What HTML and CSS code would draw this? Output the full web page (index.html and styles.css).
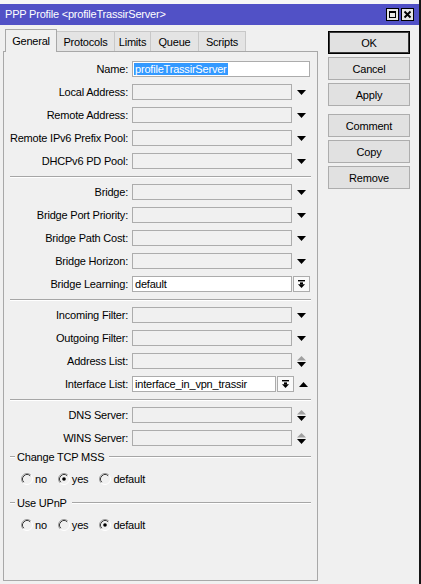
FILE: index.html
```html
<!DOCTYPE html>
<html>
<head>
<meta charset="utf-8">
<title>PPP Profile</title>
<link rel="stylesheet" href="styles.css">
</head>
<body>
<div class="window">
  <div class="topstrip"></div>
  <div class="titlebar">
    <span class="title">PPP Profile &lt;profileTrassirServer&gt;</span>
    <div class="tbtns">
      <span class="tbtn"><svg width="11" height="11" viewBox="0 0 11 11"><rect x="2.5" y="2.5" width="6" height="6" fill="none" stroke="#000" stroke-width="1"/><rect x="2" y="2" width="7" height="2" fill="#000"/></svg></span>
      <span class="tbtn"><svg width="11" height="11" viewBox="0 0 11 11"><path d="M2.5 2.5 L8.5 8.5 M8.5 2.5 L2.5 8.5" stroke="#000" stroke-width="1.9" fill="none"/></svg></span>
    </div>
  </div>
  <div class="body">
    <div class="left">
      <div class="tabs">
        <div class="tab sel t-general">General</div>
        <div class="tab t-protocols">Protocols</div>
        <div class="tab t-limits">Limits</div>
        <div class="tab t-queue">Queue</div>
        <div class="tab t-scripts">Scripts</div>
      </div>
      <div class="panel">
        <div class="sec">
          <div class="row"><span class="lbl">Name:</span><div class="inp white w178"><span class="hl">profileTrassirServer</span></div></div>
          <div class="row"><span class="lbl">Local Address:</span><div class="inp w160"></div><span class="ctl"><svg width="9" height="5" viewBox="0 0 9 5"><polygon points="0,0 9,0 4.5,5" fill="#000"/></svg></span></div>
          <div class="row"><span class="lbl">Remote Address:</span><div class="inp w160"></div><span class="ctl"><svg width="9" height="5" viewBox="0 0 9 5"><polygon points="0,0 9,0 4.5,5" fill="#000"/></svg></span></div>
          <div class="row"><span class="lbl">Remote IPv6 Prefix Pool:</span><div class="inp w160"></div><span class="ctl"><svg width="9" height="5" viewBox="0 0 9 5"><polygon points="0,0 9,0 4.5,5" fill="#000"/></svg></span></div>
          <div class="row"><span class="lbl">DHCPv6 PD Pool:</span><div class="inp w160"></div><span class="ctl"><svg width="9" height="5" viewBox="0 0 9 5"><polygon points="0,0 9,0 4.5,5" fill="#000"/></svg></span></div>
        </div>
        <div class="sep"></div>
        <div class="sec">
          <div class="row"><span class="lbl">Bridge:</span><div class="inp w160"></div><span class="ctl"><svg width="9" height="5" viewBox="0 0 9 5"><polygon points="0,0 9,0 4.5,5" fill="#000"/></svg></span></div>
          <div class="row"><span class="lbl">Bridge Port Priority:</span><div class="inp w160"></div><span class="ctl"><svg width="9" height="5" viewBox="0 0 9 5"><polygon points="0,0 9,0 4.5,5" fill="#000"/></svg></span></div>
          <div class="row"><span class="lbl">Bridge Path Cost:</span><div class="inp w160"></div><span class="ctl"><svg width="9" height="5" viewBox="0 0 9 5"><polygon points="0,0 9,0 4.5,5" fill="#000"/></svg></span></div>
          <div class="row"><span class="lbl">Bridge Horizon:</span><div class="inp w160"></div><span class="ctl"><svg width="9" height="5" viewBox="0 0 9 5"><polygon points="0,0 9,0 4.5,5" fill="#000"/></svg></span></div>
          <div class="row"><span class="lbl">Bridge Learning:</span><div class="inp white w160"><span class="val">default</span></div><span class="ibtn"><svg width="7" height="8" viewBox="0 0 7 8"><rect x="0" y="0" width="7" height="1.4" fill="#000"/><rect x="2" y="2.4" width="3" height="2" fill="#000"/><polygon points="0,4.2 7,4.2 3.5,8" fill="#000"/></svg></span></div>
        </div>
        <div class="sep"></div>
        <div class="sec">
          <div class="row"><span class="lbl">Incoming Filter:</span><div class="inp w160"></div><span class="ctl"><svg width="9" height="5" viewBox="0 0 9 5"><polygon points="0,0 9,0 4.5,5" fill="#000"/></svg></span></div>
          <div class="row"><span class="lbl">Outgoing Filter:</span><div class="inp w160"></div><span class="ctl"><svg width="9" height="5" viewBox="0 0 9 5"><polygon points="0,0 9,0 4.5,5" fill="#000"/></svg></span></div>
          <div class="row"><span class="lbl">Address List:</span><div class="inp w160"></div><span class="ctl"><svg width="9" height="11" viewBox="0 0 9 11"><polygon points="0,4.5 9,4.5 4.5,0" fill="#a0a0a0"/><polygon points="0,6 9,6 4.5,11" fill="#000"/></svg></span></div>
          <div class="row"><span class="lbl">Interface List:</span><div class="inp white w144"><span class="val">interface_in_vpn_trassir</span></div><span class="ibtn"><svg width="7" height="8" viewBox="0 0 7 8"><rect x="0" y="0" width="7" height="1.4" fill="#000"/><rect x="2" y="2.4" width="3" height="2" fill="#000"/><polygon points="0,4.2 7,4.2 3.5,8" fill="#000"/></svg></span><span class="ctl"><svg width="9" height="5" viewBox="0 0 9 5"><polygon points="0,5 9,5 4.5,0" fill="#000"/></svg></span></div>
        </div>
        <div class="sep"></div>
        <div class="sec">
          <div class="row"><span class="lbl">DNS Server:</span><div class="inp w160"></div><span class="ctl"><svg width="9" height="11" viewBox="0 0 9 11"><polygon points="0,4.5 9,4.5 4.5,0" fill="#a0a0a0"/><polygon points="0,6 9,6 4.5,11" fill="#000"/></svg></span></div>
          <div class="row"><span class="lbl">WINS Server:</span><div class="inp w160"></div><span class="ctl"><svg width="9" height="11" viewBox="0 0 9 11"><polygon points="0,4.5 9,4.5 4.5,0" fill="#a0a0a0"/><polygon points="0,6 9,6 4.5,11" fill="#000"/></svg></span></div>
        </div>
        <div class="ghead g1"><span class="gline short"></span><span class="gtext">Change TCP MSS</span><span class="gline"></span></div>
        <div class="radios">
          <span class="radio"><svg width="12" height="12" viewBox="0 0 12 12"><path d="M2.11 9.89 A5.5 5.5 0 0 1 9.89 2.11" stroke="#9a9a9a" fill="none"/><path d="M2.82 9.18 A4.5 4.5 0 0 1 9.18 2.82" stroke="#3a3a3a" fill="none"/><path d="M9.89 2.11 A5.5 5.5 0 0 1 2.11 9.89" stroke="#fff" fill="none"/></svg>no</span>
          <span class="radio"><svg width="12" height="12" viewBox="0 0 12 12"><path d="M2.11 9.89 A5.5 5.5 0 0 1 9.89 2.11" stroke="#9a9a9a" fill="none"/><path d="M2.82 9.18 A4.5 4.5 0 0 1 9.18 2.82" stroke="#3a3a3a" fill="none"/><path d="M9.89 2.11 A5.5 5.5 0 0 1 2.11 9.89" stroke="#fff" fill="none"/><circle cx="6" cy="6" r="1.8" fill="#000"/></svg>yes</span>
          <span class="radio"><svg width="12" height="12" viewBox="0 0 12 12"><path d="M2.11 9.89 A5.5 5.5 0 0 1 9.89 2.11" stroke="#9a9a9a" fill="none"/><path d="M2.82 9.18 A4.5 4.5 0 0 1 9.18 2.82" stroke="#3a3a3a" fill="none"/><path d="M9.89 2.11 A5.5 5.5 0 0 1 2.11 9.89" stroke="#fff" fill="none"/></svg>default</span>
        </div>
        <div class="ghead g2"><span class="gline short"></span><span class="gtext">Use UPnP</span><span class="gline"></span></div>
        <div class="radios">
          <span class="radio"><svg width="12" height="12" viewBox="0 0 12 12"><path d="M2.11 9.89 A5.5 5.5 0 0 1 9.89 2.11" stroke="#9a9a9a" fill="none"/><path d="M2.82 9.18 A4.5 4.5 0 0 1 9.18 2.82" stroke="#3a3a3a" fill="none"/><path d="M9.89 2.11 A5.5 5.5 0 0 1 2.11 9.89" stroke="#fff" fill="none"/></svg>no</span>
          <span class="radio"><svg width="12" height="12" viewBox="0 0 12 12"><path d="M2.11 9.89 A5.5 5.5 0 0 1 9.89 2.11" stroke="#9a9a9a" fill="none"/><path d="M2.82 9.18 A4.5 4.5 0 0 1 9.18 2.82" stroke="#3a3a3a" fill="none"/><path d="M9.89 2.11 A5.5 5.5 0 0 1 2.11 9.89" stroke="#fff" fill="none"/></svg>yes</span>
          <span class="radio"><svg width="12" height="12" viewBox="0 0 12 12"><path d="M2.11 9.89 A5.5 5.5 0 0 1 9.89 2.11" stroke="#9a9a9a" fill="none"/><path d="M2.82 9.18 A4.5 4.5 0 0 1 9.18 2.82" stroke="#3a3a3a" fill="none"/><path d="M9.89 2.11 A5.5 5.5 0 0 1 2.11 9.89" stroke="#fff" fill="none"/><circle cx="6" cy="6" r="1.8" fill="#000"/></svg>default</span>
        </div>
      </div>
    </div>
    <div class="right">
      <div class="btn def">OK</div>
      <div class="btn">Cancel</div>
      <div class="btn">Apply</div>
      <div class="btn spaced">Comment</div>
      <div class="btn">Copy</div>
      <div class="btn">Remove</div>
    </div>
  </div>
</div>
</body>
</html>
```
FILE: styles.css
```css
* { box-sizing: border-box; }
html, body { margin: 0; padding: 0; }
body {
  width: 421px;
  height: 584px;
  overflow: hidden;
  background: #f0f0f0;
  font-family: "Liberation Sans", Arial, sans-serif;
  font-size: 11px;
  letter-spacing: -0.2px;
  color: #000;
}
.window {
  width: 421px;
  height: 584px;
  background: #f0f0f0;
  border-right: 2px solid #151515;
}
.topstrip { height: 4px; background: #f6f6f6; }
.titlebar {
  height: 21px;
  background: #5151c6;
  display: flex;
  align-items: center;
  justify-content: space-between;
  padding: 0 5px 0 5px;
}
.title { color: #fff; line-height: 21px; }
.tbtns { display: flex; gap: 2px; }
.tbtn {
  width: 13px;
  height: 13px;
  background: #e6e6e6;
  border: 1px solid #000;
  display: flex;
  align-items: center;
  justify-content: center;
}
.tbtn svg { display: block; }

.body { display: flex; padding-top: 4px; }
.left { margin-left: 3px; width: 315px; }
.tabs {
  display: flex;
  align-items: flex-end;
  height: 22px;
  padding-left: 2px;
}
.tab {
  height: 20px;
  background: #e4e4e4;
  border: 1px solid #c8c8c8;
  border-bottom: none;
  display: flex;
  align-items: center;
  justify-content: center;
  padding-top: 1px;
}
.tab + .tab { border-left: none; }
.tab.sel {
  height: 23px;
  margin-bottom: -1px;
  background: #f0f0f0;
  border-color: #a8a8a8;
  position: relative;
  z-index: 1;
  padding-top: 0;
  padding-bottom: 1px;
}
.tab.sel + .tab { border-left: none; }
.t-general { width: 52px; }
.t-protocols { width: 58px; }
.t-limits { width: 36px; }
.t-queue { width: 48px; }
.t-scripts { width: 47px; }

.panel {
  height: 530px;
  border: 1px solid #a8a8a8;
  padding-top: 9px;
}
.sec { display: flex; flex-direction: column; gap: 7px; }
.row { display: flex; align-items: center; height: 16px; line-height: 16px; }
.lbl { width: 124px; text-align: right; margin-right: 4px; white-space: nowrap; }
.inp {
  height: 16px;
  border: 1px solid #acacac;
  background: #f0f0f0;
  padding-left: 1px;
  line-height: 14px;
  white-space: nowrap;
  overflow: hidden;
}
.inp.white { background: #fff; }
.w178 { width: 178px; }
.w160 { width: 160px; }
.w144 { width: 144px; }
.hl { background: #3399ff; color: #fff; padding: 0 1px 0 1px; }
.val { padding-left: 1px; }
.ctl {
  width: 18px;
  height: 16px;
  display: flex;
  align-items: center;
  justify-content: center;
  padding-left: 1px;
}
.ctl svg, .ibtn svg, .radio svg { display: block; }
.ibtn {
  width: 17px;
  height: 16px;
  margin-left: 1px;
  border: 1px solid #acacac;
  background: #fafafa;
  display: flex;
  align-items: center;
  justify-content: center;
}
.sep {
  height: 2px;
  margin: 7px 6px 6px 6px;
  border-top: 1px solid #a6a6a6;
  border-bottom: 1px solid #ffffff;
}
.ghead {
  display: flex;
  align-items: center;
  height: 12px;
  margin: 0 6px;
}
.g1 { margin-top: 5px; }
.g2 { margin-top: 11px; }
.gline {
  flex: 1;
  height: 2px;
  border-top: 1px solid #a6a6a6;
  border-bottom: 1px solid #ffffff;
}
.gline.short { flex: 0 0 5px; }
.gtext { padding: 0 5px 0 2px; white-space: nowrap; line-height: 12px; }
.radios {
  display: flex;
  align-items: center;
  gap: 11px;
  height: 14px;
  margin-top: 9px;
  padding-left: 17px;
}
.radio { display: flex; align-items: center; gap: 2px; }

.right {
  margin-left: 10px;
  width: 82px;
  padding-top: 2px;
  display: flex;
  flex-direction: column;
  gap: 3px;
}
.btn {
  height: 23px;
  border: 1px solid #adadad;
  background: #e1e1e1;
  display: flex;
  align-items: center;
  justify-content: center;
}
.btn.def { border: 1px solid #000; box-shadow: inset 0 0 0 1px #3a3a3a; }
.btn.spaced { margin-top: 5px; }
```
